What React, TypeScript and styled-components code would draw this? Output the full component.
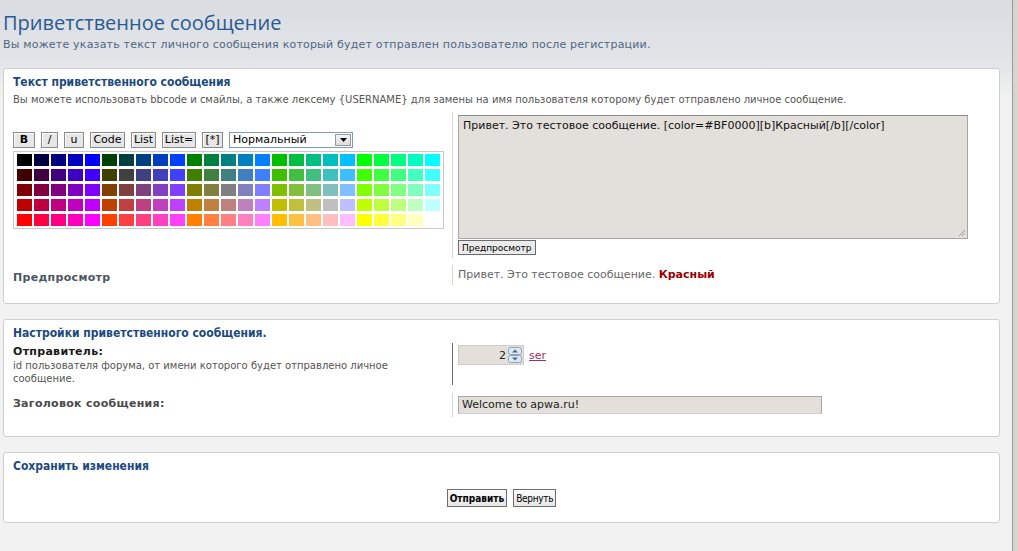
import * as React from 'react';
import styled, { createGlobalStyle } from 'styled-components';

const GlobalStyle = createGlobalStyle`
	html, body {
		margin: 0;
		padding: 0;
		height: 100%;
	}
	body {
		font-family: 'DejaVu Sans', Verdana, sans-serif;
		background: #f2f2f2;
		overflow: hidden;
	}
`;

const levels = ['00', '40', '80', 'BF', 'FF'];
const paletteRows = levels.map((r) => levels.flatMap((g) => levels.map((b) => `#${r}${g}${b}`)));

const Window = styled.div`
	display: flex;
	height: 551px;
	width: 1018px;
`;

const Page = styled.main`
	flex: 1;
	padding: 8px 12px 0 3px;
	background: linear-gradient(#d9dde2 0, #e2e4e7 60px, #f2f2f2 100px);
`;

const Frame = styled.div`
	width: 5px;
	border-left: 1px solid #9a9a9a;
	background: #d8d5cf;
`;

const Title = styled.h1`
	margin: 0;
	font-family: 'Open Sans', sans-serif;
	font-weight: 400;
	font-size: 20px;
	line-height: 30px;
	color: #2a5a92;
`;

const Subtitle = styled.p`
	margin: 0 0 16px;
	font-size: 11px;
	line-height: 14px;
	letter-spacing: 0.2px;
	color: #4f6784;
`;

const Panel = styled.section<{ $bottom?: number }>`
	background: #fff;
	border: 1px solid #cfcfcf;
	border-radius: 3px;
	padding: 6px 9px ${(p) => p.$bottom ?? 8}px;
	margin-bottom: 15px;
`;

const PanelTitle = styled.h2`
	margin: 0;
	font-family: 'DejaVu Sans Condensed', 'DejaVu Sans', sans-serif;
	font-weight: bold;
	font-size: 12px;
	line-height: 15px;
	color: #1c4a7c;
`;

const Hint = styled.p`
	margin: 3px 0 0;
	font-size: 10px;
	line-height: 13px;
	color: #555;
`;

const Row = styled.div<{ $top?: number }>`
	display: grid;
	grid-template-columns: 439px 1fr;
	margin-top: ${(p) => p.$top ?? 0}px;
`;

const LabelCell = styled.div<{ $pad?: number }>`
	padding-top: ${(p) => p.$pad ?? 0}px;
`;

const FieldCell = styled.div<{ $line?: string; $pad?: number }>`
	border-left: 1px solid ${(p) => p.$line ?? '#d4d4d4'};
	padding: ${(p) => p.$pad ?? 3}px 0 3px 5px;
`;

const Label = styled.div<{ $color?: string }>`
	font-size: 11px;
	font-weight: bold;
	line-height: 14px;
	letter-spacing: 0.3px;
	color: ${(p) => p.$color ?? '#4b5664'};
`;

const Desc = styled.div`
	font-size: 10px;
	line-height: 13px;
	color: #555;
	width: 420px;
`;

const Toolbar = styled.div`
	display: flex;
	align-items: center;
	gap: 6px;
	margin-bottom: 3px;
`;

const ToolButton = styled.button<{ $bold?: boolean; $w: number }>`
	height: 16px;
	width: ${(p) => p.$w}px;
	padding: 0;
	font-family: 'DejaVu Sans', sans-serif;
	font-size: 11px;
	font-weight: ${(p) => (p.$bold ? 'bold' : 'normal')};
	line-height: 14px;
	color: #000;
	background: #e6e6e6;
	border: 1px solid #8a8a8a;
	border-radius: 0;
	box-shadow: inset 1px 1px 0 #fff;
`;

const SelectBox = styled.div`
	display: flex;
	align-items: center;
	justify-content: space-between;
	box-sizing: border-box;
	width: 124px;
	height: 16px;
	padding: 0 1px 0 3px;
	font-size: 11px;
	line-height: 14px;
	color: #000;
	background: #fff;
	border: 1px solid #7f9db9;
`;

const SelectArrow = styled.span`
	display: flex;
	align-items: center;
	justify-content: center;
	width: 16px;
	height: 12px;
	background: linear-gradient(#f4f4f4, #dcdcdc);
	border: 1px solid #9a9a9a;
	box-sizing: border-box;
`;

const Palette = styled.div`
	display: grid;
	grid-template-columns: repeat(25, 15px);
	grid-auto-rows: 12px;
	column-gap: 2px;
	row-gap: 3px;
	width: max-content;
	padding: 2px 3px;
	border: 1px solid #c8c8c8;
`;

const Swatch = styled.span<{ $c: string }>`
	background: ${(p) => p.$c};
`;

const TextArea = styled.div`
	width: 500px;
	height: 116px;
	padding: 3px 4px;
	font-size: 11px;
	line-height: 13px;
	color: #111;
	background: #e3e0db;
	border: 1px solid #a6a6a6;
	border-top-color: #8c8c8c;
	position: relative;
`;

const Grip = styled.svg`
	position: absolute;
	right: 1px;
	bottom: 1px;
`;

const SmallButton = styled.button`
	display: block;
	margin-top: 1px;
	height: 15px;
	padding: 0 3px;
	font-family: 'DejaVu Sans', sans-serif;
	font-size: 9px;
	line-height: 12px;
	color: #000;
	background: #ebebeb;
	border: 1px solid #6a6a6a;
	border-radius: 0;
`;

const PreviewText = styled.div`
	font-size: 11px;
	line-height: 14px;
	color: #666;

	strong {
		color: #990000;
	}
`;

const InlineField = styled.div`
	display: flex;
	align-items: center;
	gap: 5px;
`;

const NumberBox = styled.div`
	display: flex;
	align-items: center;
	justify-content: flex-end;
	gap: 2px;
	width: 62px;
	height: 16px;
	padding: 1px;
	font-size: 11px;
	color: #222;
	background: #e3e0db;
	border: 1px solid #cfcdc8;
`;

const UserLink = styled.a`
	font-size: 11px;
	color: #993366;
	text-decoration: underline;
`;

const TextInput = styled.div`
	box-sizing: border-box;
	width: 364px;
	height: 18px;
	padding: 0 3px;
	font-size: 11px;
	line-height: 16px;
	color: #222;
	background: #e3e0db;
	border: 1px solid #a8a8a8;
	border-bottom-color: #d0d0d0;
`;

const Spacer = styled.div<{ $h: number }>`
	height: ${(p) => p.$h}px;
`;

const Actions = styled.div`
	display: flex;
	justify-content: center;
	gap: 6px;
	margin: 15px 0 7px;
`;

const ActionButton = styled.button<{ $bold?: boolean }>`
	height: 18px;
	padding: 0 2px;
	font-family: 'DejaVu Sans Condensed', 'DejaVu Sans', sans-serif;
	font-size: 10px;
	font-weight: ${(p) => (p.$bold ? 'bold' : 'normal')};
	letter-spacing: ${(p) => (p.$bold ? '0' : '-0.3px')};
	color: #000;
	background: linear-gradient(#fbfbfb, #e6e6e6);
	border: 1px solid #6d6d6d;
	border-radius: 0;
`;

function SpinIcon() {
	return (
		<svg width="14" height="16" viewBox="0 0 14 16">
			<rect x="0.5" y="0.5" width="13" height="7" rx="2" fill="#dfe8f2" stroke="#8aa4c0" />
			<rect x="0.5" y="8.5" width="13" height="7" rx="2" fill="#dfe8f2" stroke="#8aa4c0" />
			<path d="M4 5.5 L7 2.5 L10 5.5 Z" fill="#4d6785" />
			<path d="M4 10.5 L7 13.5 L10 10.5 Z" fill="#4d6785" />
		</svg>
	);
}

export default function App() {
	const tools: { label: string; text: string; bold?: boolean; w: number }[] = [
		{ label: 'b', text: 'B', bold: true, w: 22 },
		{ label: 'i', text: '/', w: 17 },
		{ label: 'u', text: 'u', w: 20 },
		{ label: 'code', text: 'Code', w: 35 },
		{ label: 'list', text: 'List', w: 25 },
		{ label: 'list=', text: 'List=', w: 34 },
		{ label: '*', text: '[*]', w: 21 },
	];

	return (
		<Window>
			<GlobalStyle />
			<Page>
				<Title>Приветственное сообщение</Title>
				<Subtitle>Вы можете указать текст личного сообщения который будет отправлен пользователю после регистрации.</Subtitle>

				<Panel $bottom={18}>
					<PanelTitle>Текст приветственного сообщения</PanelTitle>
					<Hint>
						Вы можете использовать bbcode и смайлы, а также лексему {'{USERNAME}'} для замены на имя пользователя которому будет отправлено личное сообщение.
					</Hint>
					<Row $top={6}>
						<LabelCell $pad={20}>
							<Toolbar>
								{tools.map((t) => (
									<ToolButton key={t.label} $bold={t.bold} $w={t.w} title={t.label}>
										{t.text}
									</ToolButton>
								))}
								<SelectBox>
									Нормальный
									<SelectArrow>
										<svg width="7" height="4" viewBox="0 0 7 4">
											<path d="M0 0 H7 L3.5 4 Z" fill="#000" />
										</svg>
									</SelectArrow>
								</SelectBox>
							</Toolbar>
							<Palette>
								{paletteRows.flat().map((c) => (
									<Swatch key={c} $c={c} />
								))}
							</Palette>
						</LabelCell>
						<FieldCell $pad={3}>
							<TextArea>
								Привет. Это тестовое сообщение. [color=#BF0000][b]Красный[/b][/color]
								<Grip width="9" height="9" viewBox="0 0 9 9">
									<path d="M8 2 L2 8 M8 5 L5 8" stroke="#9a9a9a" strokeWidth="1" />
								</Grip>
							</TextArea>
							<SmallButton>Предпросмотр</SmallButton>
						</FieldCell>
					</Row>
					<Row $top={7}>
						<LabelCell $pad={6}>
							<Label>Предпросмотр</Label>
						</LabelCell>
						<FieldCell $pad={3}>
							<PreviewText>
								Привет. Это тестовое сообщение. <strong>Красный</strong>
							</PreviewText>
						</FieldCell>
					</Row>
				</Panel>

				<Panel>
					<PanelTitle>Настройки приветственного сообщения.</PanelTitle>
					<Row $top={2}>
						<LabelCell $pad={2}>
							<Label $color="#1a1a1a">Отправитель:</Label>
							<Desc>id пользователя форума, от имени которого будет отправлено личное сообщение.</Desc>
						</LabelCell>
						<FieldCell $line="#6e6e6e" $pad={2}>
							<InlineField>
								<NumberBox>
									2 <SpinIcon />
								</NumberBox>
								<UserLink href="#">ser</UserLink>
							</InlineField>
						</FieldCell>
					</Row>
					<Row $top={8}>
						<LabelCell $pad={4}>
							<Label $color="#4a4a4a">Заголовок сообщения:</Label>
						</LabelCell>
						<FieldCell $pad={3}>
							<TextInput>Welcome to apwa.ru!</TextInput>
						</FieldCell>
					</Row>
					<Spacer $h={11} />
				</Panel>

				<Panel>
					<PanelTitle>Сохранить изменения</PanelTitle>
					<Actions>
						<ActionButton $bold>Отправить</ActionButton>
						<ActionButton>Вернуть</ActionButton>
					</Actions>
				</Panel>
			</Page>
			<Frame />
		</Window>
	);
}
